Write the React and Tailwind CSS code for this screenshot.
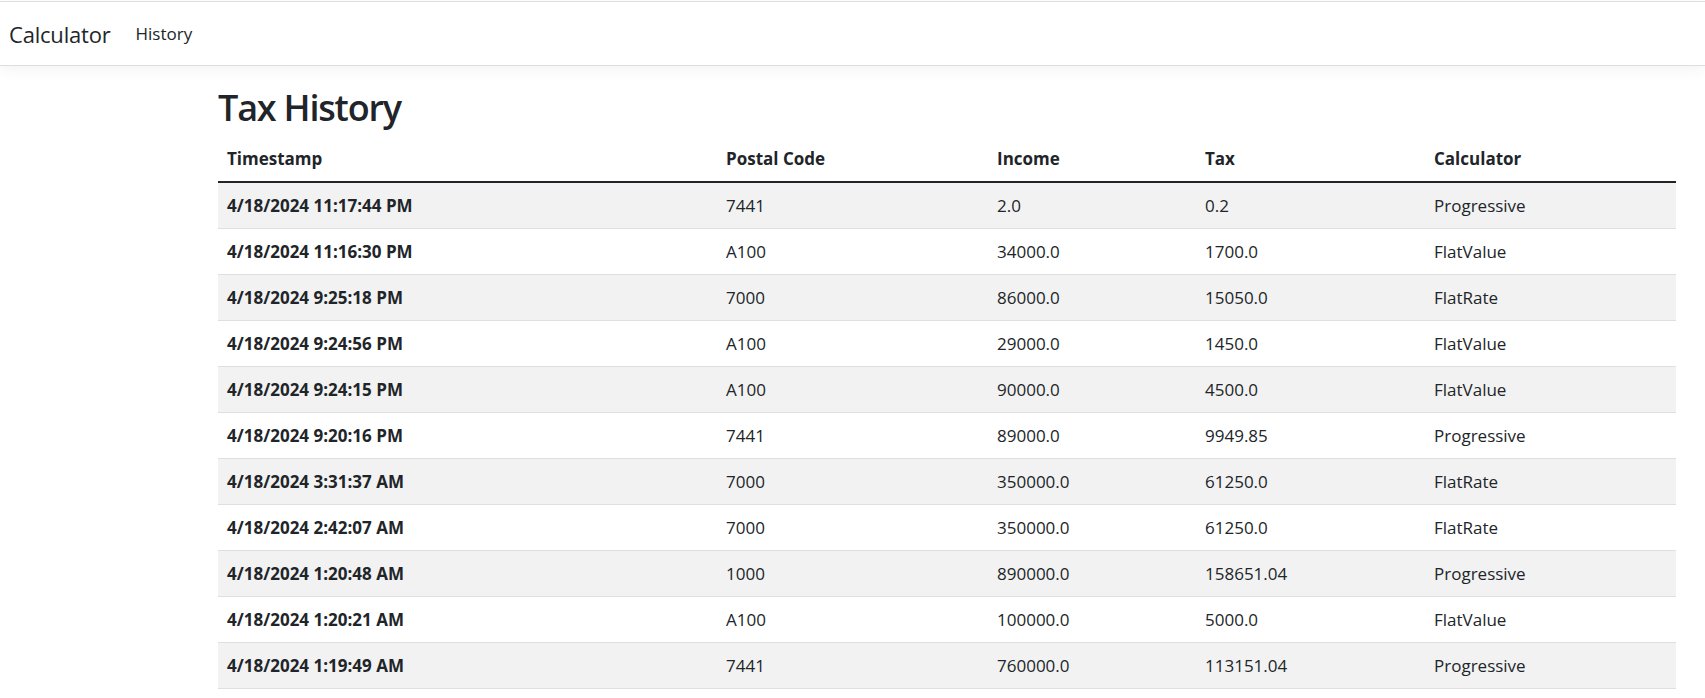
import React from "react";

const rows = [
  ["4/18/2024 11:17:44 PM", "7441", "2.0", "0.2", "Progressive"],
  ["4/18/2024 11:16:30 PM", "A100", "34000.0", "1700.0", "FlatValue"],
  ["4/18/2024 9:25:18 PM", "7000", "86000.0", "15050.0", "FlatRate"],
  ["4/18/2024 9:24:56 PM", "A100", "29000.0", "1450.0", "FlatValue"],
  ["4/18/2024 9:24:15 PM", "A100", "90000.0", "4500.0", "FlatValue"],
  ["4/18/2024 9:20:16 PM", "7441", "89000.0", "9949.85", "Progressive"],
  ["4/18/2024 3:31:37 AM", "7000", "350000.0", "61250.0", "FlatRate"],
  ["4/18/2024 2:42:07 AM", "7000", "350000.0", "61250.0", "FlatRate"],
  ["4/18/2024 1:20:48 AM", "1000", "890000.0", "158651.04", "Progressive"],
  ["4/18/2024 1:20:21 AM", "A100", "100000.0", "5000.0", "FlatValue"],
  ["4/18/2024 1:19:49 AM", "7441", "760000.0", "113151.04", "Progressive"],
];

export default function App() {
  return (
    <div className="min-h-screen bg-white text-[#212529] font-['Open_Sans',sans-serif] pt-px">
      {/* ── NAVBAR ── */}
      <nav className="h-[65px] border-t border-b border-[#dedede] bg-white shadow-[0_4px_14px_rgba(0,0,0,0.05)] flex items-center pl-[9px] gap-[25px]">
        <span className="text-[22px] leading-none tracking-[-0.2px]">Calculator</span>
        <span className="text-[17px] leading-none text-[#212529]">History</span>
      </nav>

      {/* ── MAIN ── */}
      <main className="pl-[218px] pr-[29px] pt-[20px]">
        <h2 className="text-[36px] leading-[1.2] font-semibold mb-[7px] tracking-[-1.2px]">
          Tax History
        </h2>

        <table className="w-full table-fixed border-collapse text-[17px]">
          <colgroup>
            <col className="w-[499px]" />
            <col className="w-[271px]" />
            <col className="w-[208px]" />
            <col className="w-[229px]" />
            <col className="w-[251px]" />
          </colgroup>
          <thead>
            <tr className="border-b-2 border-[#212529]">
              {["Timestamp", "Postal Code", "Income", "Tax", "Calculator"].map((h) => (
                <th key={h} className="text-left font-bold px-[9px] py-[9px] leading-[27px]">
                  {h}
                </th>
              ))}
            </tr>
          </thead>
          <tbody>
            {rows.map((r, i) => (
              <tr
                key={i}
                className={`border-b border-[#dfdfdf] ${i % 2 === 0 ? "bg-[#f2f2f2]" : "bg-white"}`}
              >
                <th className="text-left font-bold px-[9px] py-[9px] leading-[27px]">{r[0]}</th>
                <td className="px-[9px] py-[9px] leading-[27px]">{r[1]}</td>
                <td className="px-[9px] py-[9px] leading-[27px]">{r[2]}</td>
                <td className="px-[9px] py-[9px] leading-[27px]">{r[3]}</td>
                <td className="px-[9px] py-[9px] leading-[27px]">{r[4]}</td>
              </tr>
            ))}
          </tbody>
        </table>
      </main>
    </div>
  );
}
